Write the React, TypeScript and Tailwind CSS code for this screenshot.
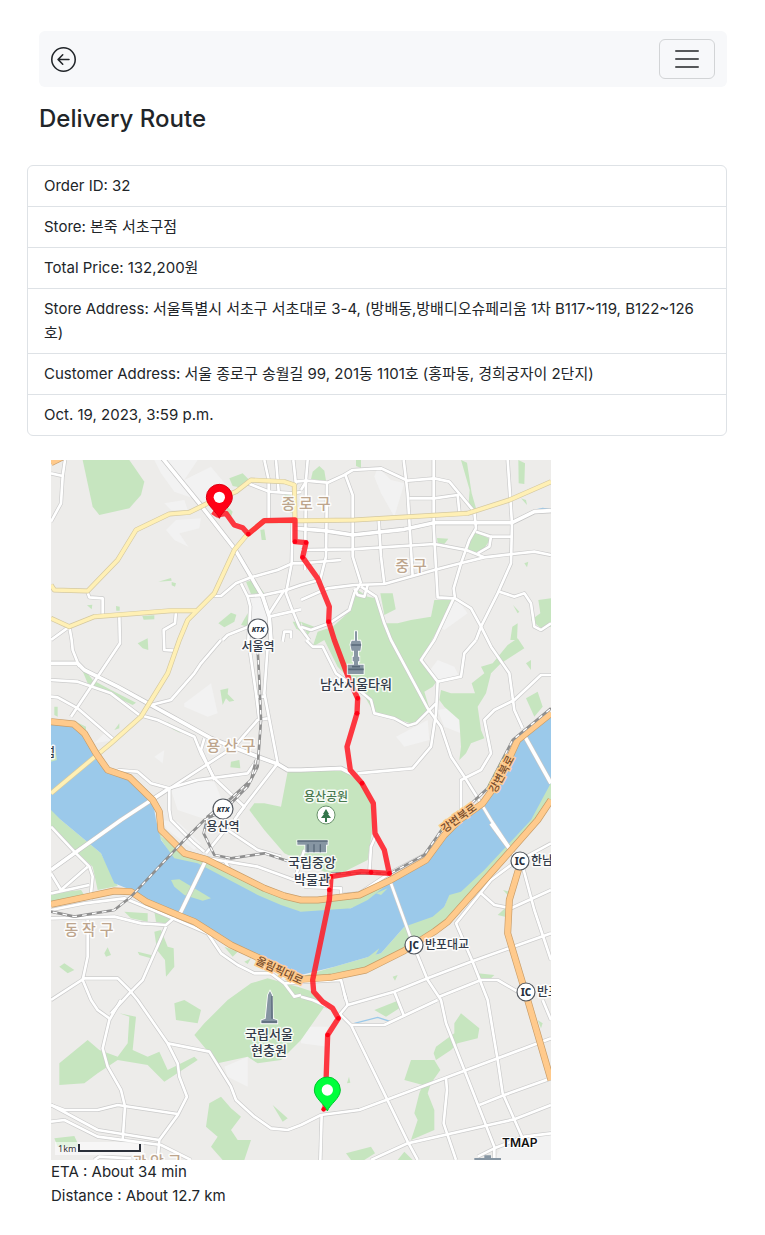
import React from 'react';

const water =
  '0,790 68,795 100,825 135,885 170,930 235,955 305,1020 315,1080 330,1140 370,1195 440,1210 620,1305 690,1335 750,1355 900,1345 950,1320 1015,1268 1125,1200 1190,1115 1295,1030 1350,955 1400,845 1500,770 1500,968 1440,1080 1300,1230 1230,1295 1195,1305 1180,1340 1145,1370 1060,1400 990,1480 850,1520 750,1545 700,1530 620,1488 540,1450 430,1380 285,1320 240,1290 190,1270 150,1180 30,1080 0,1050';

const greens = [
  '95,0 235,0 280,65 270,105 235,145 145,165 125,140',
  '535,55 575,40 600,65 580,85 545,78',
  '700,100 720,100 722,160 705,150',
  '530,140 545,155 540,170 525,160',
  '628,210 640,208 645,240 632,240',
  '585,365 610,360 640,400 600,402',
  '322,365 360,354 362,362',
  '362,366 375,370 372,380 362,376',
  '108,436 124,434 122,448',
  '195,438 206,440 206,452 196,452',
  '274,468 310,466 310,478 278,479',
  '502,490 540,458 556,464 550,485 520,502',
  '570,495 590,460 592,500',
  '725,485 750,485 750,515 735,505',
  '780,58 785,35 805,18 820,32 825,62',
  '915,0 930,0 930,24 915,18',
  '1230,0 1248,8 1262,100 1275,145 1270,165 1252,140 1256,90',
  '1402,0 1422,10 1420,72 1403,70',
  '1410,115 1425,120 1428,135',
  '1158,234 1192,236 1180,252 1160,250',
  '1255,240 1275,215 1318,238 1300,265 1275,278 1250,268',
  '1420,310 1432,305 1428,322',
  '1462,420 1500,415 1500,500 1470,505 1440,480 1468,460',
  '1386,435 1405,455 1400,460',
  '1378,540 1384,500 1400,490 1398,540',
  '988,400 1025,400 1034,448 1000,465',
  '845,500 890,460 920,390 950,410 975,415 1000,490 1040,490 1080,480 1140,470 1150,420 1205,420 1170,490 1110,600 1160,660 1145,680 1120,695 1135,745 1095,795 1030,775 970,760 930,690 860,620 820,540 785,560 800,515',
  '750,485 790,500 770,525',
  '1170,690 1200,700 1272,700 1262,670 1300,640 1290,620 1325,610 1370,555 1400,535 1420,565 1350,610 1320,640 1305,700 1280,740 1290,810 1300,835 1260,850 1245,880 1225,900 1230,860 1225,780 1180,740 1165,720',
  '1425,610 1440,600 1440,630',
  '1425,715 1460,695 1475,740 1450,770',
  '710,935 750,930 870,925 930,970 960,1030 965,1100 950,1200 850,1250 790,1220 700,1180 640,1110 595,1050 610,1030 640,1030 690,1040',
  '260,550 290,535 292,570 275,565',
  '85,610 125,660 180,690 255,728 245,735 170,700 110,670',
  '350,785 390,820 365,808',
  '10,740 20,740 20,770 10,765',
  '190,810 205,790 205,805',
  '75,785 105,800 105,830',
  '508,690 532,685 530,702 550,722 535,725 525,715 515,735',
  '540,905 565,900 568,925 538,922',
  '0,1030 30,1080 150,1180 200,1278 140,1290 125,1220 0,1105',
  '0,1300 90,1290 100,1305 0,1325',
  '315,1040 332,1130 400,1175 465,1195 700,1308 800,1320 920,1305 1000,1262 1018,1270 950,1330 880,1350 770,1360 650,1335 440,1215 370,1200 325,1130',
  '1500,955 1440,1045 1300,1215 1195,1300 1180,1340 1060,1400 990,1480 850,1520 750,1550 830,1555 945,1530 1060,1475 1150,1415 1200,1380 1460,1080 1500,1035',
  '220,1355 290,1360 290,1385 240,1375',
  '310,1355 380,1370 350,1392 315,1385',
  '310,1415 330,1410 350,1460 368,1465 370,1520 345,1550 342,1500 318,1470',
  '160,1480 170,1462 180,1485 165,1490',
  '260,1475 300,1485 300,1495 265,1485',
  '25,1520 40,1510 70,1530 50,1540',
  '520,1460 560,1475 545,1490',
  '580,1505 600,1495 590,1512',
  '530,1620 600,1570 650,1555 740,1580 800,1600 820,1640 750,1740 690,1800 620,1810 590,1790 500,1810 430,1725 460,1690',
  '25,1850 25,1810 110,1740 145,1770 200,1790 230,1750 235,1670 205,1660 255,1670 245,1770 290,1790 325,1775 350,1830 430,1790 440,1800 340,1865 290,1815 200,1800 140,1840 100,1870 25,1875',
  '370,1630 400,1620 450,1650 440,1690 375,1680',
  '475,1930 510,1910 540,1945 570,1970 540,2010 560,2040 600,2040 580,2100 515,2100 480,2060 500,2030 465,2000',
  '665,1935 710,1975 695,1985',
  '10,2035 70,2028 85,2060 20,2060',
  '1155,1760 1210,1720 1210,1690 1230,1660 1285,1705 1280,1735 1220,1750 1200,1770 1155,1800 1148,1780',
  '1060,1860 1080,1800 1150,1800 1168,1830 1140,1870 1130,1900 1150,1950 1150,2010 1080,2040 1100,1980 1090,1960 1105,1900 1115,1875',
  '885,2080 960,2060 972,2080 940,2100 900,2100',
  '1040,2100 1060,2075 1085,2100',
  '970,1650 1040,1622 1045,1645 1005,1670',
  '1340,1365 1362,1345 1362,1370',
  '1356,1290 1375,1295 1370,1305',
  '1280,1540 1330,1545 1320,1555 1290,1555',
  '1025,1550 1040,1545 1032,1562',
  '1460,1680 1475,1690 1470,1705',
  '888,1870 894,1850 898,1868',
];

const pale = [
  '310,0 440,0 400,60 480,20 530,80 500,140 370,95 330,40',
  '340,130 400,120 410,150 360,150',
  '345,210 375,180 450,175 445,205 385,220 412,260 370,240',
  '980,20 1020,60 1060,70 1030,170 990,100 970,50',
  '595,400 635,410 650,480 640,540 595,530',
  '400,730 480,670 500,760 470,770 400,740',
  '130,850 170,810 190,840',
  '310,890 340,870 335,910',
  '360,990 440,960 490,965 530,1060 470,1080 380,1050',
  '330,1080 380,1085 450,1150 430,1170 350,1110',
  '1035,830 1130,780 1135,840 1060,860',
  '1130,640 1160,600 1210,620 1225,650 1160,665',
  '1160,750 1220,740 1230,820 1180,800',
  '1130,480 1220,420 1250,460 1180,510',
  '750,1700 830,1700 830,1760 750,1750',
  '520,1820 590,1790 590,1880 530,1850',
  '1350,2060 1500,2010 1500,2100 1330,2100',
];

const island = [
  '360,1260 385,1258 480,1315 455,1322 400,1305 370,1280',
  '895,1515 940,1500 985,1465 960,1510 900,1520',
  '975,1300 1010,1285 990,1305',
  '0,870 12,865 18,900 0,905',
];

const streets = [
  '0,40 35,48 30,130 0,185',
  '35,48 42,0',
  '110,398 115,412 155,415 155,465',
  '205,470 207,550 140,650 60,770',
  '0,540 55,500 62,540 65,570 85,620',
  '375,455 372,490 338,510 340,570 372,572',
  '485,408 510,408 555,370 600,352 680,330 725,310 750,310 870,300',
  '570,370 590,410 598,440 592,540 615,700 625,780',
  '590,408 640,405 700,392 750,375 805,360',
  '640,0 653,60 653,180',
  '675,0 683,95',
  '590,70 655,95 725,100 750,96',
  '727,0 735,75',
  '725,180 722,310 705,400 720,440 745,500 775,540',
  '700,390 655,460',
  '655,470 750,448',
  '515,540 530,525 592,500',
  '695,545 700,515 720,515 720,535',
  '735,65 765,62 830,68 880,45 905,30 990,25 1070,62 1150,55 1195,65 1270,155 1275,205 1255,240 1230,310 1208,385 1212,415 1260,445 1290,500 1320,560 1375,640 1390,750 1415,805',
  '770,0 765,60 762,330',
  '750,90 768,60',
  '828,68 825,290 805,370',
  '883,45 905,105 905,290 930,370',
  '1058,0 1070,100 1085,350',
  '1148,0 1148,200 1160,412 1208,415 1150,540 1110,600 1160,665 1230,650 1240,580 1275,540',
  '1075,115 1150,115 1220,105 1225,155',
  '1370,0 1383,190 1380,310 1340,400 1290,500 1275,540',
  '750,270 900,268 1150,252 1245,270 1300,292',
  '750,420 830,385 910,375 1000,372 1150,330 1235,308 1300,292 1385,282 1450,275 1500,285',
  '983,180 990,290 1000,372',
  '1275,215 1320,230 1315,260 1280,280',
  '1320,230 1383,230',
  '1345,395 1390,410 1420,400 1440,430 1450,500 1470,510 1500,490',
  '930,370 910,400 895,450 835,490 780,510 750,500',
  '910,385 920,405 940,410 950,375',
  '930,380 975,410 1000,490 1020,540 1130,745 1170,800 1200,890 1240,950 1290,1030 1320,1080 1400,1200',
  '765,540 785,560 815,560 855,640 930,695 960,720 970,760 1030,775 1070,797 1095,790 1155,730',
  '1160,665 1155,760 1140,860 1085,925 920,940',
  '1500,645 1470,645 1390,720 1330,750 1300,780 1320,880 1290,930 1230,960 1230,1050',
  '0,660 80,665 180,700 265,765 320,780 430,830 450,880 490,955 580,1040 550,1080',
  '0,710 20,712 80,745 190,840',
  '510,540 450,610 430,640 360,720 300,735',
  '650,560 640,700 680,910 560,1065',
  '460,835 450,870 490,960',
  '650,775 620,780 550,860 350,990',
  '615,710 645,710',
  '200,930 260,935 300,970 355,985 440,960 590,940 625,890',
  '355,985 355,1050 360,1080 430,1150 460,1175',
  '0,1100 75,1180 115,1220 125,1250 118,1320',
  '0,1300 115,1275',
  '0,1240 30,1290 110,1220',
  '345,1400 275,1560 235,1600 180,1660',
  '0,1350 100,1330 220,1315 330,1360 470,1420 510,1480 560,1515 610,1540 660,1540 700,1570 730,1610 750,1605',
  '700,1570 770,1565 870,1560 885,1620',
  '0,1375 190,1370 270,1390 345,1395 385,1360',
  '110,1380 110,1490 95,1560 120,1620 140,1650 175,1675',
  '0,1620 100,1555 200,1555 235,1590 260,1620 350,1750 380,1810 385,1850 408,1910 380,1965 325,2040 320,2100',
  '210,1620 175,1680 155,1765 170,1820 210,1890 222,1940 215,2040',
  '0,1935 40,1950 140,1950 200,1935 380,1962',
  '0,1935 140,2010 325,2040',
  '0,1985 40,1980 140,2030 330,2055 420,2100',
  '350,1750 475,1775 540,1880 555,1920 610,1970 660,2005 710,2010 750,1995 810,1965 925,1950 1180,1855 1500,1735',
  '130,2100 145,2090 240,2095',
  '812,1965 808,2100',
  '750,1610 785,1620 830,1640',
  '865,1660 900,1695 1070,2045 1100,2100',
  '900,1695 1000,1695 1160,1620',
  '865,1665 890,1635 1030,1595 1130,1555 1260,1505 1500,1420',
  '890,1635 880,1600',
  '1030,1595 1060,1670',
  '1165,1610 1290,1560 1340,1560 1400,1595',
  '1018,1265 1085,1450 1130,1560 1170,1620 1185,1690 1240,1830 1330,2060 1330,2100',
  '1500,1290 1380,1345 1330,1335 1290,1300',
  '1500,1150 1380,1215 1320,1260 1215,1390 1265,1505 1310,1620 1340,1800 1355,1900 1415,2035',
  '1410,1200 1450,1350 1500,1500',
  '1475,1620 1500,1680',
  '1285,1935 1360,1905 1500,1855',
  '960,2100 1070,2050 1300,1998 1390,1978 1500,1935',
  '1185,1855 1188,1890 1178,1990 1215,2100',
  '1280,2090 1330,2065 1420,2030 1500,2020',
  '973,1130 960,1160 955,1240',
  '400,1175 470,1195 620,1220 730,1260 760,1170',
  '530,1110 620,1170 690,1190',
  '465,1180 530,1100',
  '520,1200 540,1235',
  '760,1280 870,1285 870,1305 925,1300 1015,1240 1120,1185 1190,1100',
];

const avenues = [
  '335,-5 445,130 550,265 600,350 635,410 655,470 660,540 650,570',
  '732,205 820,212 905,225 1060,208 1150,188 1383,188 1450,155 1500,152',
  '0,610 80,610 100,630 200,680 300,735 400,790 480,835 620,890 680,912 710,930 750,930 870,925 900,940',
  '355,985 210,1080 70,1180 0,1230',
  '465,1200 385,1365',
  '1422,830 1500,970',
  '1320,1090 1400,1200',
];

const yellows = [
  '0,375 10,390 110,393 200,300 255,210 355,162 415,157 470,130 555,95 600,60 700,65 730,75 732,180',
  '590,222 640,182 750,182 910,180 1250,160 1375,120 1500,65',
  '590,222 550,270 490,400 410,480 385,540 350,640 270,770 180,850 0,1000',
  '0,475 55,500 130,470 360,452 435,452',
];

const oranges = [
  '0,785 68,792 100,820 135,880 170,930 235,952 305,1020 325,1055 330,1110 400,1180 465,1198 540,1235 640,1285 700,1308 750,1320 800,1320 925,1305 1015,1262 1125,1200 1180,1125 1225,1080 1295,1030 1345,960 1400,840 1500,760',
  '0,1333 100,1312 190,1293 240,1295 285,1325 385,1367 430,1385 540,1455 620,1492 700,1540 750,1558 840,1552 945,1530 1060,1472 1150,1415 1190,1385 1350,1205 1460,1080 1500,1020',
  '1405,1220 1375,1320 1370,1420 1415,1570 1430,1620 1500,1860',
  '0,8 40,-12',
];

const rails = [
  '620,570 625,660 630,780 620,920 590,980 520,1050 460,1080 400,1140 240,1310 190,1350 70,1370 0,1355',
  '615,900 600,960 540,1015 470,1070 458,1120 490,1185 540,1195 640,1180 730,1210',
  '840,1240 1018,1240 1120,1185 1175,1105',
  '1240,1050 1310,985 1385,840 1500,745',
];

const route =
  '485,155 500,165 525,160 550,195 575,203 592,222 640,182 732,180 732,245 765,248 755,292 800,355 835,440 833,485 850,540 895,660 920,715 918,760 888,860 898,930 933,970 967,1030 972,1120 1000,1170 1015,1240 930,1235 840,1250 835,1320 785,1560 788,1595 815,1625 845,1645 862,1675 830,1725 822,1950';

const waypoints = [[592, 222], [732, 245], [765, 248], [755, 292], [833, 485], [920, 715], [918, 760], [933, 970], [1015, 1240], [960, 1237], [840, 1250], [835, 1290], [862, 1675], [830, 1725], [818, 1948]];

function Lines({ data, width, color }: { data: string[]; width: number; color: string }) {
  return (
    <g fill="none" stroke={color} strokeWidth={width} strokeLinejoin="round">
      {data.map((points) => <polyline key={points} points={points} />)}
    </g>
  );
}

function Areas({ data, color }: { data: string[]; color: string }) {
  return <g fill={color}>{data.map((points) => <polygon key={points} points={points} />)}</g>;
}

function Pin({ x, y, fill, edge }: { x: number; y: number; fill: string; edge: string }) {
  return (
    <g transform={`translate(${x} ${y})`}>
      <path d="M0 63C-8 42-39 25-39 0a39 39 0 0 1 78 0C39 25 8 42 0 63Z" fill={fill} stroke={edge} strokeWidth="3" />
      <circle r="17" fill="#fff" />
    </g>
  );
}

function Badge({ x, y, text, size, r }: { x: number; y: number; text: string; size: number; r: number }) {
  return (
    <g>
      <circle cx={x} cy={y} r={r} fill="#fff" stroke="#555a61" strokeWidth="1.2" />
      <text x={x} y={y + size * 0.36} textAnchor="middle" fontSize={size} fontWeight="800" fill="#26303d" fontStyle={text === 'KTX' ? 'italic' : 'normal'}>{text}</text>
    </g>
  );
}

function Label({ x, y, children, color = '#333b49', size = 12, weight = 500, anchor = 'middle' }: {
  x: number; y: number; children: string; color?: string; size?: number; weight?: number; anchor?: 'start' | 'middle';
}) {
  return (
    <text x={x} y={y} textAnchor={anchor} fontSize={size} fontWeight={weight} fill={color} stroke="#fff" strokeOpacity=".85" strokeWidth="3" strokeLinejoin="round" paintOrder="stroke">{children}</text>
  );
}

function RouteMap() {
  return (
    <svg viewBox="0 0 500 700" role="img" aria-label="Delivery route map" className="block w-full max-w-[500px] overflow-hidden font-['Noto_Sans','Noto_Sans_CJK_KR',sans-serif]">
      <rect width="500" height="700" fill="#edecea" />
      <g transform="scale(.333333)">
        <Areas data={pale} color="#f2f2f2" />
        <Areas data={greens} color="#c6e5bf" />
        <polygon points={water} fill="#9bc9ea" />
        <Areas data={island} color="#c6e5bf" />
        <path d="M910 1690 980 1672 1020 1685 1150 1628M1455 150l20-5 25 3" fill="none" stroke="#9bc9ea" strokeWidth="4" />
        <Lines data={streets} width={12} color="#cbcbcb" />
        <Lines data={avenues} width={15} color="#c4c4c4" />
        <Lines data={streets} width={8} color="#fff" />
        <Lines data={avenues} width={11} color="#fff" />
        <Lines data={yellows} width={15} color="#d5c9a0" />
        <Lines data={yellows} width={11} color="#fff0b5" />
        <Lines data={oranges} width={21} color="#c99d68" />
        <Lines data={oranges} width={17} color="#ffca8c" />
        <Lines data={rails} width={8} color="#8f8f8f" />
        <g fill="none" stroke="#fff" strokeWidth="4" strokeDasharray="14 16">
          {rails.map((points) => <polyline key={points} points={points} />)}
        </g>
      </g>

      <g>
        <Label x={255} y={49} color="#bda58d" size={15}>종 로 구</Label>
        <Label x={360} y={111} color="#bda58d" size={15}>중 구</Label>
        <Label x={180} y={291} color="#bda58d" size={15}>용 산 구</Label>
        <Label x={38} y={475} color="#bda58d" size={15}>동 작 구</Label>
        <Label x={106} y={707} color="#bda58d" size={15}>관 악 구</Label>
      </g>

      <g transform="scale(.333333)">
        <polyline points={route} fill="none" stroke="#ff1e28" strokeOpacity=".88" strokeWidth="16" strokeLinejoin="round" />
        <g fill="#ff0015">{waypoints.map(([x, y]) => <circle key={`${x}-${y}`} cx={x} cy={y} r="7" />)}</g>
        <g stroke="#fff" strokeWidth="5" paintOrder="stroke" fill="#8796a3">
          <path d="M912 514h6v28h10l3 12-3 18h-7v18h4v14h-4v10h17v28h-48v-28h19v-10h-4v-14h4v-18h-7l-4-18 4-12h10Z" />
          <path d="M739 1142h91v12h-5v23h-62v-23h-24Z" />
          <path d="M651 1605l6-12 6 12 3 71 13 5v9h-48v-9l13-5Z" />
        </g>
        <path d="M901 555h29M892 628h46M903 620h24" stroke="#596979" strokeWidth="5" />
        <path d="M771 1153v24M789 1153v24M808 1153v24M739 1143h91" stroke="#596979" strokeWidth="4" />
        <path d="M663 1608v68M632 1686h46" stroke="#596979" strokeWidth="4" />
        <path d="M1270 2098h80M1300 2090h20" stroke="#8796a3" strokeWidth="8" />
      </g>

      <Badge x={207} y={169} text="KTX" size={7} r={10} />
      <Badge x={172} y={349} text="KTX" size={7} r={10} />
      <Badge x={469} y={401} text="IC" size={10} r={9} />
      <Badge x={363} y={485} text="JC" size={10} r={9} />
      <Badge x={475} y={532} text="IC" size={10} r={9} />
      <circle cx="275" cy="355" r="9" fill="#fff" stroke="#69916b" />
      <path d="m275 349-3 5h1l-3 4h4v4h2v-4h4l-3-4h1Z" fill="#34764b" />

      <Label x={207} y={191}>서울역</Label>
      <Label x={172} y={371}>용산역</Label>
      <Label x={305} y={229} size={13}>남산서울타워</Label>
      <Label x={275} y={341} color="#48794d">용산공원</Label>
      <Label x={261} y={407} size={13}>국립중앙</Label>
      <Label x={261} y={424} size={13}>박물관</Label>
      <Label x={218} y={579} size={13}>국립서울</Label>
      <Label x={218} y={595} size={13}>현충원</Label>
      <Label x={374} y={489} anchor="start">반포대교</Label>
      <Label x={480} y={405} anchor="start">한남</Label>
      <Label x={486} y={536} anchor="start">반포</Label>
      <Label x={-7} y={297} anchor="start">섬</Label>
      <g fill="#784d2d" fontSize="11" fontWeight="500" stroke="#ffca8c" strokeWidth="3" paintOrder="stroke" textAnchor="middle">
        <text transform="translate(454 316) rotate(-62)">강변북로</text>
        <text transform="translate(410 361) rotate(-36)">강변북로</text>
        <text transform="translate(227 514) rotate(25)">올림픽대로</text>
      </g>

      <g transform="scale(.333333)">
        <Pin x={505} y={112} fill="#ff0015" edge="#d90012" />
        <Pin x={829} y={1890} fill="#00ff3c" edge="#00c52e" />
      </g>

      <rect x="4" y="682" width="89" height="13" fill="#fff" fillOpacity=".55" />
      <text x="7" y="692" fontSize="9" fill="#333">1km</text>
      <path d="M28 684v7h61v-7" fill="none" stroke="#2b3039" strokeWidth="2" />
      <text x="451" y="687" fontSize="12" fontWeight="600" fill="#111" stroke="#fff" strokeWidth="2" paintOrder="stroke" className="font-['Inter',sans-serif]">TMAP</text>
    </svg>
  );
}

const details = [
  'Order ID: 32',
  'Store: 본죽 서초구점',
  'Total Price: 132,200원',
  'Store Address: 서울특별시 서초구 서초대로 3-4, (방배동,방배디오슈페리움 1차 B117~119, B122~126호)',
  'Customer Address: 서울 종로구 송월길 99, 201동 1101호 (홍파동, 경희궁자이 2단지)',
  'Oct. 19, 2023, 3:59 p.m.',
];

export default function App() {
  return (
    <main className="min-h-screen bg-white pt-[31px] pr-[38px] pb-6 pl-[39px] font-['Inter','Noto_Sans_CJK_KR',sans-serif] text-[15px] leading-6 text-[#212529]">
      <nav className="flex h-14 items-center justify-between rounded-md bg-[#f7f8fa] px-3">
        <a href="#back" aria-label="Back">
          <svg width="25" height="25" viewBox="0 0 16 16" fill="currentColor">
            <path fillRule="evenodd" d="M1 8a7 7 0 1 0 14 0A7 7 0 0 0 1 8m15 0A8 8 0 1 1 0 8a8 8 0 0 1 16 0m-4.500-.5a.5.5 0 0 1 0 1H5.707l2.147 2.146a.5.5 0 0 1-.708.708l-3-3a.5.5 0 0 1 0-.708l3-3a.5.5 0 1 1 .708.708L5.707 7.500z" />
          </svg>
        </a>
        <button type="button" aria-label="Toggle navigation" className="flex h-10 w-14 items-center justify-center rounded-md border border-[#d2d4d6] text-[#56585a]">
          <svg width="30" height="30" viewBox="0 0 30 30" fill="none" stroke="currentColor" strokeWidth="2" strokeLinecap="round">
            <path d="M4 7h22M4 15h22M4 23h22" />
          </svg>
        </button>
      </nav>
      <h1 className="mt-4 text-2xl font-medium">Delivery Route</h1>
      <ul className="mt-[30px] -ml-3 divide-y divide-[#dee2e6] rounded-md border border-[#dee2e6]">
        {details.map((line) => (
          <li key={line} className="px-4 py-2">{line}</li>
        ))}
      </ul>
      <section className="mt-6 ml-3">
        <RouteMap />
        <p>ETA : About 34 min</p>
        <p>Distance : About 12.7 km</p>
      </section>
    </main>
  );
}
